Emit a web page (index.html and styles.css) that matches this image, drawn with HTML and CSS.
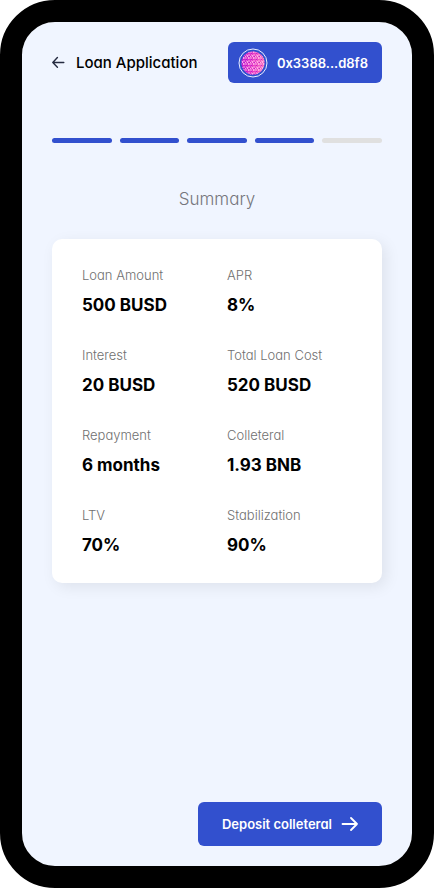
FILE: index.html
```html
<!DOCTYPE html>
<html lang="en">
<head>
<meta charset="utf-8">
<meta name="viewport" content="width=device-width, initial-scale=1">
<title>Loan Application</title>
<link rel="stylesheet" href="styles.css">
</head>
<body>
<div class="device">
  <header class="header">
    <a class="back" href="#">
      <svg width="14" height="14" viewBox="0 0 14 14" fill="none" stroke="#252b40" stroke-width="1.4" stroke-linecap="round" stroke-linejoin="round" aria-hidden="true"><path d="M11.800 6.500H.8M5.400 1.500L.8 6.500l4.600 4.700"/></svg>
      <h1 class="title">Loan Application</h1>
    </a>
    <button class="button wallet" type="button">
      <svg width="30" height="30" viewBox="0 0 30 30" aria-hidden="true">
        <defs>
          <linearGradient id="pink" x1="0" x2="1"><stop offset="0" stop-color="#c31bd0"/><stop offset=".5" stop-color="#e83cc5"/><stop offset="1" stop-color="#fa70bd"/></linearGradient>
          <pattern id="grid" width="5" height="6" patternUnits="userSpaceOnUse">
            <path d="M0 1h2M3 1h1M1 4h3M2.500 2v1M.5 3v2M4.500 1v2" stroke="#ffc4ef" stroke-width=".8"/>
            <path d="M1 2.500h1M3 5.500h1" stroke="#a50bd0" stroke-width=".6"/>
          </pattern>
        </defs>
        <circle cx="15" cy="15" r="14" fill="none" stroke="#e9edff"/>
        <circle cx="15" cy="15" r="11.500" fill="url(#pink)"/>
        <circle cx="15" cy="15" r="11.500" fill="url(#grid)"/>
      </svg>
      <span>0x3388...d8f8</span>
    </button>
  </header>
  <main class="content">
    <div class="steps" role="img" aria-label="Step 4 of 5">
      <span class="step done"></span><span class="step done"></span><span class="step done"></span><span class="step done"></span><span class="step"></span>
    </div>
    <h2 class="heading">Summary</h2>
    <dl class="card">
      <div class="item"><dt>Loan Amount</dt><dd>500 BUSD</dd></div>
      <div class="item"><dt>APR</dt><dd>8%</dd></div>
      <div class="item"><dt>Interest</dt><dd>20 BUSD</dd></div>
      <div class="item"><dt>Total Loan Cost</dt><dd>520 BUSD</dd></div>
      <div class="item"><dt>Repayment</dt><dd>6 months</dd></div>
      <div class="item"><dt>Colleteral</dt><dd>1.93 BNB</dd></div>
      <div class="item"><dt>LTV</dt><dd>70%</dd></div>
      <div class="item"><dt>Stabilization</dt><dd>90%</dd></div>
    </dl>
  </main>
  <footer class="footer">
    <button class="button deposit" type="button">
      <span>Deposit colleteral</span>
      <svg width="17" height="16" viewBox="0 0 17 16" fill="none" stroke="currentColor" stroke-width="1.8" stroke-linecap="round" stroke-linejoin="round" aria-hidden="true"><path d="M1.500 8h14.500M10 2l6 6-6 6"/></svg>
    </button>
  </footer>
</div>
</body>
</html>
```
FILE: styles.css
```css
* {
  box-sizing: border-box;
}

body {
  margin: 0;
  background: #fff;
  color: #000;
  font-family: Inter, "Liberation Sans", sans-serif;
  font-feature-settings: "cv11";
}

h1, h2, dl, dt, dd {
  margin: 0;
}

.device {
  display: flex;
  flex-direction: column;
  min-height: 100vh;
  padding: 20px 30px;
  border: 22px solid #000;
  border-radius: 55px;
  background: #f0f5ff;
  background-clip: padding-box;
}

.header {
  display: flex;
  align-items: center;
  justify-content: space-between;
}

.back {
  display: flex;
  align-items: center;
  gap: 10px;
  color: inherit;
  text-decoration: none;
}

.title {
  font-size: 15px;
  font-weight: 500;
  line-height: 20px;
  white-space: nowrap;
}

.button {
  display: flex;
  align-items: center;
  border: 0;
  border-radius: 6px;
  background: #3250ce;
  color: #fff;
  font: inherit;
  font-feature-settings: inherit;
  font-size: 13px;
  font-weight: 600;
  line-height: 20px;
  white-space: nowrap;
  cursor: pointer;
}

.wallet {
  gap: 9px;
  height: 41px;
  padding: 0 14px 0 10px;
}

.steps {
  display: flex;
  gap: 8px;
  margin-top: 55px;
}

.step {
  flex: 1;
  height: 5px;
  border-radius: 3px;
  background: #e0e0e0;
}

.done {
  background: #3250ce;
}

.heading {
  margin-top: 44px;
  color: #75757c;
  font-size: 17px;
  font-weight: 300;
  line-height: 24px;
  text-align: center;
}

.card {
  display: grid;
  grid-template-columns: 1fr 1fr;
  gap: 28px 20px;
  margin-top: 28px;
  padding: 26px 30px;
  border-radius: 10px;
  background: #fff;
  box-shadow: 4px 4px 15px rgba(0, 0, 0, 0.08);
}

.item {
  display: grid;
  gap: 8px;
  white-space: nowrap;
}

dt {
  color: #707070;
  font-size: 13px;
  font-weight: 300;
  line-height: 20px;
}

dd {
  font-size: 17px;
  font-weight: 700;
  line-height: 24px;
}

.footer {
  display: flex;
  justify-content: flex-end;
  margin-top: auto;
  padding-top: 24px;
}

.deposit {
  gap: 9px;
  height: 44px;
  padding: 0 24px;
}
```
